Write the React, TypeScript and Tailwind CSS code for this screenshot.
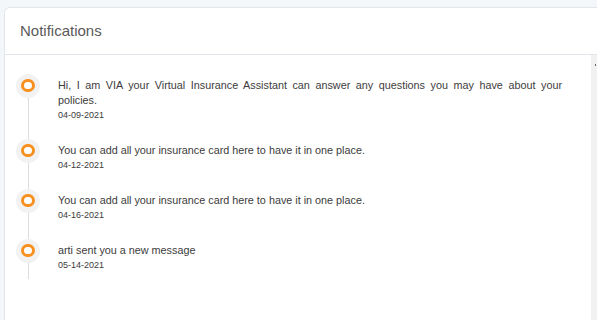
const notifications = [
    {
        message:
            'Hi, I am VIA your Virtual Insurance Assistant can answer any questions you may have about your policies.',
        date: '04-09-2021',
    },
    {
        message: 'You can add all your insurance card here to have it in one place.',
        date: '04-12-2021',
    },
    {
        message: 'You can add all your insurance card here to have it in one place.',
        date: '04-16-2021',
    },
    {
        message: 'arti sent you a new message',
        date: '05-14-2021',
    },
];

function TimelineDot() {
    return (
        <div className="relative w-[24px] h-[15px] flex items-center justify-center">
            <div className="absolute w-[24px] h-[24px] rounded-full bg-[#f2f2f2]" />
            <div className="relative w-[14px] h-[13px] rounded-full border-[3px] border-[#f7901e] bg-white" />
        </div>
    );
}

export default function App() {
    return (
        <div
            className="h-[320px] overflow-hidden bg-[#f4f7fa] pt-[7px] pl-[4px]"
            style={{ fontFamily: '"Liberation Sans", Arial, sans-serif' }}
        >
            <div className="w-[600px] h-[330px] bg-white border border-[#e2e6ea] rounded-tl-[6px] flex flex-col">
                <div className="h-[47px] shrink-0 border-b border-[#e2e6ea] px-[15px] pt-[1px] flex items-center text-[15px] text-[#5a5a5a]">
                    Notifications
                </div>
                <div className="flex flex-1">
                    <div className="relative w-[586px] pt-[23px] pr-[29px]">
                        <div className="absolute left-[23px] top-[19px] h-[205px] w-px bg-[#dddddd]" />
                        {notifications.map((n, i) => (
                            <div key={i} className="flex pb-[21px]">
                                <div className="w-[53px] shrink-0 pl-[11px]">
                                    <TimelineDot />
                                </div>
                                <div className="flex-1">
                                    <p className="text-[10.8px] leading-[15px] text-[#3c3c3c] text-justify">
                                        {n.message}
                                    </p>
                                    <p className="text-[9px] leading-[14px] text-[#3c3c3c]">{n.date}</p>
                                </div>
                            </div>
                        ))}
                    </div>
                    <div className="relative w-[6px] bg-[#f1f1f1]">
                        <div className="absolute right-[1px] top-[9px] w-px h-[2px] bg-[#666666]" />
                    </div>
                </div>
            </div>
        </div>
    );
}
